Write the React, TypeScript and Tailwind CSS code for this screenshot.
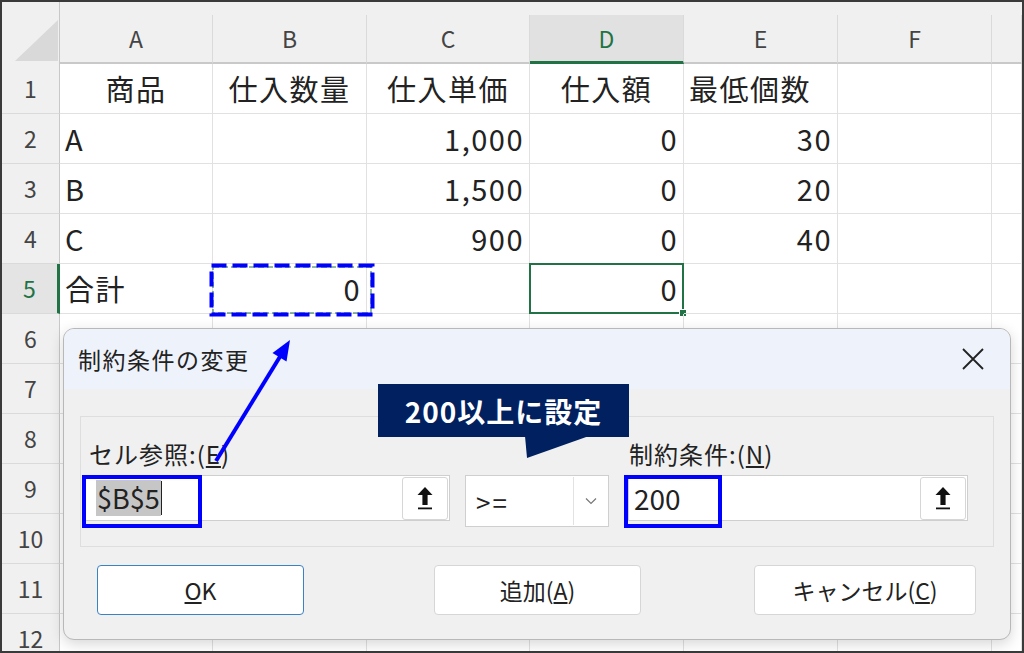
import React from "react";

const FONT = "font-['Noto_Sans_CJK_JP','Noto_Sans',sans-serif]";

type Align = "l" | "c" | "r";
type Cell = [string, Align] | null;

const COLS = [
  { key: "A", w: "w-[153px]" },
  { key: "B", w: "w-[154px]" },
  { key: "C", w: "w-[163px]" },
  { key: "D", w: "w-[154px]" },
  { key: "E", w: "w-[154px]" },
  { key: "F", w: "w-[154px]" },
  { key: "", w: "flex-1" },
];

const ROWS: Cell[][] = [
  [["商品", "c"], ["仕入数量", "c"], ["仕入単価", "c"], ["仕入額", "c"], ["最低個数", "l"], null, null],
  [["A", "l"], null, ["1,000", "r"], ["0", "r"], ["30", "r"], null, null],
  [["B", "l"], null, ["1,500", "r"], ["0", "r"], ["20", "r"], null, null],
  [["C", "l"], null, ["900", "r"], ["0", "r"], ["40", "r"], null, null],
  [["合計", "l"], ["0", "r"], null, ["0", "r"], null, null, null],
  ...Array.from({ length: 7 }, () => [null, null, null, null, null, null, null] as Cell[]),
];

const alignClass: Record<Align, string> = {
  l: "justify-start",
  c: "justify-center",
  r: "justify-end",
};

function UploadButton() {
  return (
    <div className="flex h-[43px] w-[46px] items-center justify-center rounded-[3px] border border-[#d6d6d6] bg-white">
      <svg width="20" height="28" viewBox="0 0 20 28">
        <path d="M10 3 L17.5 11 L12.6 11 L12.6 21 L7.4 21 L7.4 11 L2.5 11 Z" fill="#111" />
        <rect x="3" y="23.5" width="14" height="1.8" fill="#111" />
      </svg>
    </div>
  );
}

function Sheet() {
  return (
    <div className={`h-[653px] w-[1024px] overflow-hidden border-2 border-[#3a3a3a] bg-white ${FONT}`}>
      {/* column header */}
      <div className="flex h-[62px] bg-[#f0f0f0]">
        <div className="relative w-[58px] shrink-0 border-r border-[#c8c8c8]">
          <svg className="absolute left-[13px] top-[18px]" width="43" height="41" viewBox="0 0 43 41">
            <polygon points="43,0 43,41 0,41" fill="#d9d9d9" />
          </svg>
        </div>
        {COLS.map((c, i) => (
          <div
            key={i}
            className={`${c.w} mt-[13px] flex shrink-0 items-center justify-center border-r border-[#dadada] text-[23px] ${
              c.key === "D"
                ? "border-b-[3px] border-b-[#217346] bg-[#e1e1e1] text-[#217346]"
                : "border-b-2 border-b-[#c9c9c9] text-[#444]"
            }`}
          >
            {c.key}
          </div>
        ))}
      </div>

      {ROWS.map((row, r) => (
        <div key={r} className="flex h-[50px]">
          <div
            className={`flex w-[58px] shrink-0 items-center justify-center border-b border-[#dadada] text-[23px] ${
              r === 4
                ? "border-r-[3px] border-r-[#217346] bg-[#e4e4e4] text-[#217346]"
                : "border-r border-r-[#c8c8c8] bg-[#f0f0f0] text-[#444]"
            }`}
          >
            {r + 1}
          </div>
          {COLS.map((c, i) => {
            const cell = row[i];
            return (
              <div
                key={i}
                className={`${c.w} relative flex shrink-0 items-center border-b border-r border-[#e1e1e1] px-[5px] text-[29px] leading-none tracking-[1.5px] text-[#222] ${
                  cell ? alignClass[cell[1]] : ""
                }`}
              >
                {cell ? cell[0] : ""}
                {r === 4 && i === 3 && (
                  <div className="absolute -left-px -top-px bottom-[-1px] right-[-1px] border-2 border-[#217346]">
                    <div className="absolute -bottom-[5px] -right-[5px] h-[8px] w-[8px] border border-white bg-[#217346]" />
                  </div>
                )}
              </div>
            );
          })}
        </div>
      ))}
    </div>
  );
}

function Dialog() {
  return (
    <div
      className={`absolute left-[63px] top-[328px] flex h-[312px] w-[948px] flex-col overflow-hidden rounded-[11px] border border-[#b8b8b8] bg-[#f0f0f0] shadow-[0_4px_14px_rgba(0,0,0,0.16)] ${FONT}`}
    >
      <div className="flex h-[60px] shrink-0 items-center justify-between bg-[#eef2fa] pl-[14px] pr-[26px]">
        <span className="text-[23px] tracking-[1.5px] text-[#222]">制約条件の変更</span>
        <svg width="22" height="22" viewBox="0 0 22 22">
          <path d="M1 1 L21 21 M21 1 L1 21" stroke="#222" strokeWidth="1.8" />
        </svg>
      </div>

      <div className="mx-[16px] mt-[27px] flex h-[131px] border border-[#dedede] pl-[4px] pt-[21px]">
        {/* cell reference */}
        <div className="flex w-[365px] flex-col">
          <div className="h-[32px] pl-[4px] text-[24px] leading-[32px] tracking-[1px] text-[#222]">
            セル参照:(<span className="underline underline-offset-2">E</span>)
          </div>
          <div className="mt-[5px] flex h-[46px] items-center justify-between border border-[#cfcfcf] bg-white pl-[10px] pr-px">
            <div className="flex items-center">
              <span className="bg-[#c6c6c6] px-px text-[27px] leading-[36px] text-[#222]">$B$5</span>
              <span className="h-[34px] w-px bg-[#222]" />
            </div>
            <UploadButton />
          </div>
        </div>

        {/* operator */}
        <div className="ml-[15px] mt-[37px] flex h-[52px] w-[144px] items-center justify-between border border-[#cfcfcf] bg-white pl-[10px] pr-px">
          <span className="text-[26px] tracking-[2px] text-[#222]">&gt;=</span>
          <div className="flex h-[48px] w-[34px] items-center justify-center border-l border-[#e2e2e2]">
            <svg width="12" height="8" viewBox="0 0 12 8">
              <path d="M1 1.5 L6 6.5 L11 1.5" fill="none" stroke="#777" strokeWidth="1.2" />
            </svg>
          </div>
        </div>

        {/* constraint */}
        <div className="ml-[19px] flex w-[340px] flex-col">
          <div className="h-[32px] pl-px text-[24px] leading-[32px] tracking-[1px] text-[#222]">
            制約条件:(<span className="underline underline-offset-2">N</span>)
          </div>
          <div className="mt-[5px] flex h-[46px] items-center justify-between border border-[#cfcfcf] bg-white pl-[5px] pr-px">
            <span className="text-[28px] text-[#222]">200</span>
            <UploadButton />
          </div>
        </div>
      </div>

      <div className="mt-[18px] flex text-[23px] text-[#222]">
        <button className="ml-[33px] flex h-[50px] w-[207px] items-center justify-center rounded-[4px] border border-[#3b82c4] bg-white">
          <span className="underline underline-offset-2">O</span>K
        </button>
        <button className="ml-[130px] flex h-[50px] w-[207px] items-center justify-center rounded-[4px] border border-[#d6d6d6] bg-white">
          追加(<span className="underline underline-offset-2">A</span>)
        </button>
        <button className="ml-[113px] flex h-[50px] w-[222px] items-center justify-center rounded-[4px] border border-[#d6d6d6] bg-white">
          キャンセル(<span className="underline underline-offset-2">C</span>)
        </button>
      </div>
    </div>
  );
}

export default function App() {
  return (
    <div className="relative h-[653px] w-[1024px] overflow-hidden">
      <Sheet />

      {/* copy marquee on B5 */}
      <svg className="pointer-events-none absolute left-[208px] top-[262px]" width="168" height="56" viewBox="0 0 168 56">
        <rect x="5" y="5" width="158" height="46" fill="none" stroke="#217346" strokeWidth="1" strokeDasharray="6 3" />
        <rect x="3.5" y="3.5" width="161" height="49" fill="none" stroke="#0000ff" strokeWidth="4" strokeDasharray="15 6" />
      </svg>

      <Dialog />

      {/* annotation boxes */}
      <div className="pointer-events-none absolute left-[82px] top-[475px] h-[53px] w-[120px] border-4 border-[#0000ff]" />
      <div className="pointer-events-none absolute left-[624px] top-[475px] h-[53px] w-[98px] border-4 border-[#0000ff]" />

      {/* callout */}
      <svg className="pointer-events-none absolute left-0 top-0" width="1024" height="653">
        <polygon points="525,436 589,436 527,458" fill="#002060" />
        <line x1="216" y1="461" x2="281" y2="355" stroke="#0000ff" strokeWidth="4" />
        <polygon points="290,340 286.5,361.5 272.5,353" fill="#0000ff" />
      </svg>
      <div
        className={`absolute left-[378px] top-[384px] flex h-[53px] w-[251px] items-center justify-center bg-[#002060] text-[28px] font-bold tracking-[1px] text-white ${FONT}`}
      >
        200以上に設定
      </div>
    </div>
  );
}
